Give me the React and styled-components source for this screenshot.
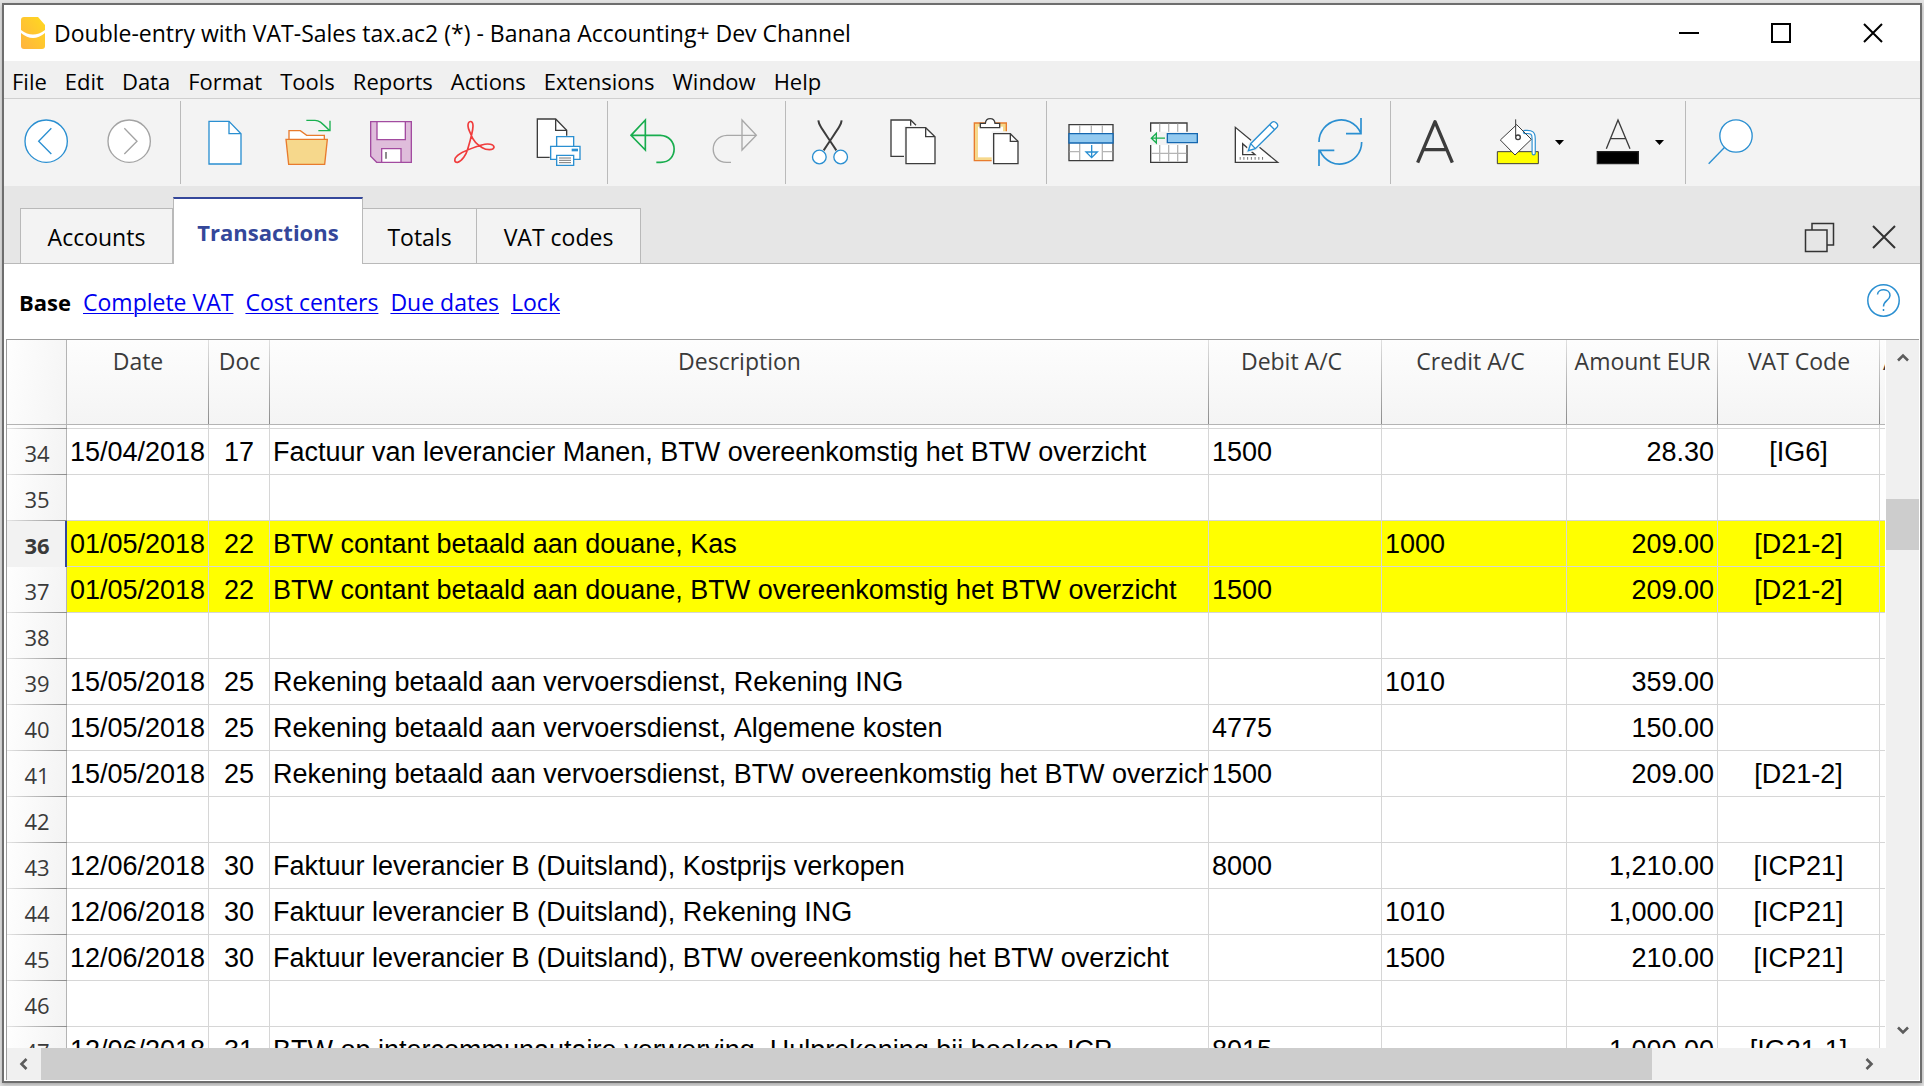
import React from "react";
import styled, { createGlobalStyle, css } from "styled-components";

const GlobalStyle = createGlobalStyle`
  *, *::before, *::after { box-sizing: border-box; }
  body { margin: 0; background: #e2e2e2; }
  button { font: inherit; color: inherit; background: none; border: 0; padding: 0; margin: 0; }
`;

const uiFont = `"Open Sans", "Noto Sans", sans-serif`;
const blue = "#2a8fd1";
const ink = "#3c3c3c";
const line = "#d6d6d6";

const Window = styled.div`
  height: calc(100vh - 6px);
  margin: 3px 2px;
  border: 2px solid #6e6e6e;
  box-shadow: 0 2px 4px rgba(0, 0, 0, 0.25);
  background: #fff;
  display: flex;
  flex-direction: column;
  overflow: hidden;
  font-family: ${uiFont};
  font-size: 23px;
  line-height: 32px;
  color: #000;
`;

/* ---------- title bar ---------- */

const TitleBar = styled.header`
  display: flex;
  align-items: center;
  height: 56px;
  flex: none;
  padding: 0 1px 0 17px;
`;

const Title = styled.h1`
  flex: 1;
  margin: 0 0 0 8px;
  font-size: inherit;
  font-weight: 400;
  white-space: nowrap;
`;

const CaptionButton = styled.button`
  width: 92px;
  height: 56px;
  display: flex;
  align-items: center;
  justify-content: center;
`;

const MenuBar = styled.nav`
  display: flex;
  align-items: center;
  gap: 18px;
  height: 38px;
  flex: none;
  padding: 2px 8px 0;
  background: #f0f0f0;
  border-bottom: 1px solid #cfcfcf;
  font-size: 22px;
`;

const MenuItem = styled.button`
  white-space: nowrap;
`;

/* ---------- toolbar ---------- */

const Toolbar = styled.div`
  display: flex;
  align-items: center;
  height: 87px;
  flex: none;
  padding-left: 2px;
  background: #f3f3f3;
`;

const Separator = styled.span`
  width: 1px;
  height: 83px;
  margin: 0 3px 0 8px;
  background: #bababa;
`;

const ToolButton = styled.button`
  width: ${(p) => (p.$split ? "74px" : "83px")};
  height: 87px;
  padding-left: 16px;
  display: flex;
  align-items: center;
`;

const DropButton = styled.button`
  width: 17px;
  height: 87px;
  margin-right: 9px;
  display: flex;
  align-items: center;
  justify-content: center;
`;

const Glyph = styled.svg`
  width: 51px;
  height: 51px;
  display: block;
  fill: none;
  stroke: ${(p) => p.$color || blue};
  stroke-width: 4;
`;

/* ---------- tabs ---------- */

const TabStrip = styled.div`
  display: flex;
  align-items: flex-end;
  height: 78px;
  flex: none;
  padding-left: 16px;
  background: linear-gradient(#b9b9b9, #b9b9b9) bottom / 100% 1px no-repeat, #e6e6e6;
`;

const Tab = styled.button`
  width: ${(p) => p.$width}px;
  height: 56px;
  padding-top: 2px;
  border: 1px solid #b9b9b9;
  border-left-width: ${(p) => (p.$joined ? 0 : 1)}px;
  background: #f3f3f3;
  white-space: nowrap;
  ${(p) =>
    p.$active &&
    css`
      height: 67px;
      padding-bottom: 2px;
      border-top: 2px solid #34479a;
      border-bottom: 0;
      background: #fff;
      color: #34479a;
      font-size: 22px;
      font-weight: 700;
    `}
`;

const TabActions = styled.div`
  display: flex;
  align-items: center;
  gap: 37px;
  margin-left: auto;
  height: 56px;
  padding: 2px 24px 0 0;
`;

const IconButton = styled.button`
  display: flex;
`;

/* ---------- view links ---------- */

const ViewBar = styled.div`
  display: flex;
  align-items: center;
  gap: 12px;
  height: 75px;
  flex: none;
  padding: 0 20px 0 15px;
  white-space: nowrap;
  & > button { margin-left: auto; }
`;

const CurrentView = styled.strong`
  font-size: 22px;
`;

const ViewLink = styled.a`
  color: #0000f0;
  text-decoration: underline;
  text-decoration-thickness: 1px;
  text-underline-offset: 2px;
`;

/* ---------- table ---------- */

const Frame = styled.main`
  flex: 1;
  min-height: 0;
  display: flex;
  flex-direction: column;
  margin: 0 1px 1px 2px;
  border: 1px solid #9d9d9d;
  border-right: 0;
  border-bottom: 0;
`;

const Upper = styled.div`
  flex: 1;
  min-height: 0;
  display: flex;
`;

const TableArea = styled.div`
  flex: 1;
  min-width: 0;
  overflow: hidden;
  margin-right: 1px;
`;

const Ledger = styled.table`
  width: 100%;
  table-layout: fixed;
  border-collapse: separate;
  border-spacing: 0;
`;

const HeadCell = styled.th`
  height: 85px;
  padding: 5px ${(p) => (p.$account ? 8 : 0)}px 0 ${(p) => (p.$clipped ? 3 : 0)}px;
  vertical-align: top;
  text-align: ${(p) => (p.$clipped ? "left" : "center")};
  font-weight: 400;
  color: #3a3a3a;
  white-space: nowrap;
  overflow: hidden;
  border-bottom: 1px solid #b4b4b4;
  background:
    linear-gradient(#e0e0e0, ${(p) => (p.$clipped ? "#f4f4f4" : "#8c8c8c")}) right / ${(p) => (p.$clipped ? 0 : 1)}px 100% no-repeat,
    linear-gradient(#fdfdfd, #f4f4f4);
`;

const Corner = styled.td`
  border-bottom: 1px solid #b4b4b4;
  background:
    linear-gradient(#b4b4b4, #b4b4b4) right / 1px 100% no-repeat,
    linear-gradient(100deg, #fefefe, #f4f4f4);
`;

const RowNumber = styled.th`
  padding: 1px 0 0;
  text-align: center;
  font-weight: ${(p) => (p.$current ? 700 : 400)};
  font-size: 22px;
  line-height: 32px;
  color: #3a3a3a;
  background:
    linear-gradient(90deg, #e4e4e4, #8c8c8c) bottom / 100% 1px no-repeat,
    linear-gradient(#b4b4b4, #b4b4b4) right / 1px 100% no-repeat,
    linear-gradient(100deg, #fefefe, #f3f3f3);
  ${(p) =>
    p.$current &&
    css`
      background:
        linear-gradient(#34479a, #34479a) right / 2px 100% no-repeat,
        #f2f2f2;
    `}
`;

const Cell = styled.td`
  height: ${(p) => (p.$stub ? 4 : 46)}px;
  padding: 0 ${(p) => (p.$align === "left" ? 0 : 3)}px 0 3px;
  font-family: "Liberation Sans", Arial, sans-serif;
  font-size: 27px;
  font-kerning: none;
  line-height: 32px;
  text-align: ${(p) => p.$align || "left"};
  white-space: nowrap;
  border-right: 1px solid ${line};
  border-bottom: 1px solid ${line};
  background: ${(p) => (p.$marked ? "#ffff00" : "#fff")};
  background-clip: padding-box;
  &:last-child { padding: 0; border-right: 0; }
`;

const CellText = styled.div`
  overflow: hidden;
`;

/* ---------- scroll bars ---------- */

const Bar = styled.div`
  display: flex;
  flex: none;
  flex-direction: ${(p) => (p.$vertical ? "column" : "row")};
  width: ${(p) => (p.$vertical ? "33px" : "auto")};
  height: ${(p) => (p.$vertical ? "auto" : "32px")};
  padding-right: ${(p) => (p.$vertical ? 0 : 33)}px;
  background: #f0f0f0;
`;

const Stepper = styled.button`
  flex: none;
  width: ${(p) => (p.$vertical ? 33 : 34)}px;
  height: ${(p) => (p.$vertical ? 36 : 32)}px;
  display: flex;
  align-items: center;
  justify-content: center;
`;

const Track = styled.span`
  flex: ${(p) => p.$share} 1 0;
  background: ${(p) => (p.$thumb ? "#cdcdcd" : "transparent")};
`;

/* ---------- drawings ---------- */

const Tool = ({ label, x, color, split, children }) => (
  <ToolButton type="button" aria-label={label} $split={split}>
    <Glyph viewBox={`${x} 63 153 153`} $color={color} aria-hidden="true">
      {children}
    </Glyph>
  </ToolButton>
);

const Drop = ({ label }) => (
  <DropButton type="button" aria-label={label}>
    <svg width="9" height="5" viewBox="0 0 9 5" aria-hidden="true">
      <path d="M0 0h9L4.500 5z" />
    </svg>
  </DropButton>
);

const Chevron = ({ turn }) => (
  <svg width="12" height="12" viewBox="0 0 12 12" aria-hidden="true">
    <path
      d="M1 8.500L6 3.500L11 8.500"
      fill="none"
      stroke="#5c5c5c"
      strokeWidth="2.600"
      transform={`rotate(${turn} 6 6)`}
    />
  </svg>
);

const columns = [
  { label: "Date", width: 142, align: "left" },
  { label: "Doc", width: 61, align: "center" },
  { label: "Description", align: "left" },
  { label: "Debit A/C", width: 173, align: "left", account: true },
  { label: "Credit A/C", width: 185, align: "left", account: true },
  { label: "Amount EUR", width: 151, align: "right" },
  { label: "VAT Code", width: 162, align: "center" },
];

const rows = [
  [34, "15/04/2018", "17", "Factuur van leverancier Manen, BTW overeenkomstig het BTW overzicht", "1500", "", "28.30", "[IG6]"],
  [35],
  [36, "01/05/2018", "22", "BTW contant betaald aan douane, Kas", "", "1000", "209.00", "[D21-2]"],
  [37, "01/05/2018", "22", "BTW contant betaald aan douane, BTW overeenkomstig het BTW overzicht", "1500", "", "209.00", "[D21-2]"],
  [38],
  [39, "15/05/2018", "25", "Rekening betaald aan vervoersdienst, Rekening ING", "", "1010", "359.00", ""],
  [40, "15/05/2018", "25", "Rekening betaald aan vervoersdienst, Algemene kosten", "4775", "", "150.00", ""],
  [41, "15/05/2018", "25", "Rekening betaald aan vervoersdienst, BTW overeenkomstig het BTW overzicht", "1500", "", "209.00", "[D21-2]"],
  [42],
  [43, "12/06/2018", "30", "Faktuur leverancier B (Duitsland), Kostprijs verkopen", "8000", "", "1,210.00", "[ICP21]"],
  [44, "12/06/2018", "30", "Faktuur leverancier B (Duitsland), Rekening ING", "", "1010", "1,000.00", "[ICP21]"],
  [45, "12/06/2018", "30", "Faktuur leverancier B (Duitsland), BTW overeenkomstig het BTW overzicht", "", "1500", "210.00", "[ICP21]"],
  [46],
  [47, "12/06/2018", "31", "BTW op intercommunautaire verwerving, Hulprekening bij boeken ICP", "8015", "", "1,000.00", "[IG21-1]"],
];

const marked = new Set([36, 37]);
const currentRow = 36;

const LedgerTable = () => (
  <Ledger>
    <colgroup>
      <col style={{ width: 60 }} />
      {columns.map((c) => (
        <col key={c.label} style={{ width: c.width }} />
      ))}
      <col style={{ width: 5 }} />
    </colgroup>
    <thead>
      <tr>
        <Corner />
        {columns.map((c) => (
          <HeadCell key={c.label} scope="col" $account={c.account}>{c.label}</HeadCell>
        ))}
        <HeadCell scope="col" $clipped>Amount</HeadCell>
      </tr>
    </thead>
    <tbody>
      <tr>
        <RowNumber as="td" />
        {columns.map((c) => (
          <Cell key={c.label} $stub />
        ))}
        <Cell $stub />
      </tr>
      {rows.map(([number, ...values]) => (
        <tr key={number}>
          <RowNumber scope="row" $current={number === currentRow}>{number}</RowNumber>
          {columns.map((c, i) => (
            <Cell key={c.label} $align={c.align} $marked={marked.has(number)}>
              {values[i] && <CellText>{values[i]}</CellText>}
            </Cell>
          ))}
          <Cell $marked={marked.has(number)} />
        </tr>
      ))}
    </tbody>
  </Ledger>
);

const MainToolbar = () => (
  <Toolbar role="toolbar" aria-label="Main">
    <Tool label="Back" x={66}>
      <circle cx="138.500" cy="135.500" r="63.500" fill="#fff" />
      <path d="M154 97L116 135.500L154 174" />
    </Tool>
    <Tool label="Forward" x={315} color="#a3a3a3">
      <circle cx="387.500" cy="135.500" r="63.500" fill="#fff" />
      <path d="M373 97L411 135.500L373 174" />
    </Tool>
    <Separator />
    <Tool label="New" x={600}>
      <path d="M627 76H687L723 113V204H627Z" fill="#fff" />
      <path d="M687 76V113H723" />
    </Tool>
    <Tool label="Open" x={849} color="#e87b2d">
      <path d="M867 130V104H901L920 118H973V130" fill="#fff" />
      <path d="M858 130H982L974 205H866Z" fill="#f6d88c" />
      <path d="M919 73H945C957 73 962 77 989 104M955 104H990V74" stroke="#18b04f" />
    </Tool>
    <Tool label="Save" x={1098} color="#a24ba0">
      <path d="M1112 77H1234V199H1130L1112 181Z" fill="#dfbddb" />
      <path d="M1131 77H1216V131H1131ZM1145 158H1203V199H1145Z" fill="#fff" />
      <path d="M1158 168V188" stroke="#555" />
    </Tool>
    <Tool label="Export to PDF" x={87} color="#f03c3c">
      <path strokeWidth="5" d="M144 90C143 72 159 72 159 90C159 105 155 120 143 160C139 175 126 196 113 199C102 200 102 188 110 181C120 170 150 158 185 147C205 141 222 145 222 154C220 163 200 163 187 155C170 145 158 130 153 116C148 104 144 98 144 90Z" />
    </Tool>
    <Tool label="Print" x={336} color={ink}>
      <path d="M352 69H407L440 103V184H352Z" fill="#fff" />
      <path d="M407 69V103H440" />
      <path d="M389 149H407V119H464V149H483V193H464V211H407V193H389Z" fill="#f3f3f3" stroke="none" />
      <g stroke={blue} fill="#fff">
        <path d="M410 122H461V151H410ZM392 151H480V190H392Z" />
        <path d="M455 158H474V166H455Z" fill={blue} stroke="none" />
        <path d="M410 178H461V208H410Z" />
      </g>
      <path d="M417 186H453M417 193H453M417 200H453" stroke="#777" strokeWidth="3" />
    </Tool>
    <Separator />
    <Tool label="Undo" x={621} color="#18ad4e">
      <path strokeWidth="5" d="M676 72V162L633 118ZM633 118H721C776 120 776 199 722 199H709" />
    </Tool>
    <Tool label="Redo" x={870} color="#a8a8a8">
      <path d="M966 72V162L1009 118ZM1009 118H921C866 120 866 199 920 199H933" />
    </Tool>
    <Separator />
    <Tool label="Cut" x={75} color={ink}>
      <path strokeWidth="6" d="M115 73C117 88 124 95 169 163M185 73C183 88 176 95 131 163" />
      <g stroke={blue}>
        <circle cx="118" cy="183" r="20.500" fill="#fff" />
        <circle cx="182" cy="183" r="20.500" fill="#fff" />
      </g>
    </Tool>
    <Tool label="Copy" x={324} color={ink}>
      <path d="M372 181H333V72H392L408 88" fill="#fff" />
      <path d="M392 72V88H372V181" stroke="none" fill="#fff" />
      <path d="M392 72V89" />
      <path d="M373 90H440L470 122V207H373Z" fill="#f3f3f3" stroke="none" />
      <path d="M378 95H437L465 122V203H378Z" fill="#fff" />
      <path d="M437 95V122H465" />
    </Tool>
    <Tool label="Paste" x={573} color={ink}>
      <path d="M583 81H679V194H583Z" fill="#f6d88c" stroke="#e87b2d" />
      <path d="M594 92H669V184H594Z" fill="#fff" stroke="none" />
      <path d="M601 95V82H616C618 63 643 63 645 82H659V95Z" fill="#fff" />
      <path d="M635 106H694L719 130V212H635Z" fill="#f3f3f3" stroke="none" />
      <path d="M641 113H691L714 136V203H641Z" fill="#fff" />
      <path d="M691 113V136H714" />
    </Tool>
    <Separator />
    <Tool label="Insert rows" x={78} color={ink}>
      <path d="M87 86H219V194H87Z" fill="#fff" />
      <path d="M119 88V110M154 88V110M187 88V110M119 142V192M187 142V192M89 167H119M187 167H217" stroke="#b5b5b5" />
      <path d="M87 113H219V141H87Z" fill="#93caf0" stroke="#1467b0" />
      <path d="M155 147V185M138 168H172L155 185Z" stroke={blue} />
    </Tool>
    <Tool label="Delete rows" x={327} color={ink}>
      <path d="M332 81H441V199H332Z" fill="#fff" />
      <path d="M359 83V197M386 83V197M413 83V197M334 172H439" stroke="#b5b5b5" />
      <path d="M328 107H478V147H328Z" fill="#f3f3f3" stroke="none" />
      <path d="M382 113H472V140H382Z" fill="#93caf0" stroke="#1467b0" />
      <path d="M375 126.500H334M349 112V141L334 126.500Z" stroke="#18ad4e" />
    </Tool>
    <Tool label="Design" x={576} color={ink}>
      <path d="M586 94V199H713Z" fill="#fff" />
      <path d="M608 143V176H645Z" />
      <path d="M599 187H672" stroke="#777" strokeWidth="8" strokeDasharray="3 8.200" />
      <path d="M625 164L632 143L696 79C704 72 718 86 711 94L646 158Z" fill="#fff" stroke="#f3f3f3" strokeWidth="12" />
      <path d="M625 164L632 143L696 79C704 72 718 86 711 94L646 158ZM632 143L646 158M689 86L704 101" fill="#fff" stroke={blue} />
    </Tool>
    <Tool label="Recalculate" x={825}>
      <path d="M837 138C837 72 930 42 963 112M963 66V113H918M965 138C965 205 872 234 839 163M837 210V163H883" strokeWidth="5" />
    </Tool>
    <Separator />
    <Tool label="Bold" x={60} color={ink}>
      <path strokeWidth="10" strokeLinejoin="round" d="M83 200L135 77L187 200M98 161H172" />
    </Tool>
    <Tool label="Fill colour" x={309} color={ink} split>
      <path d="M322 167H445V203H322Z" fill="#ffff00" strokeWidth="3" />
      <path d="M380 86L424 130L375 177L331 132Z" fill="#fff" strokeWidth="3" />
      <path d="M405 108C426 106 431 112 431 128V172" stroke={blue} strokeWidth="13" strokeLinecap="round" />
      <path d="M405 108C426 106 431 112 431 128V172" stroke="#fff" strokeWidth="6" strokeLinecap="round" />
      <path d="M380 86L424 130" strokeWidth="3" />
      <path d="M377 70V120" strokeWidth="3" />
      <circle cx="384" cy="124" r="7" />
    </Tool>
    <Drop label="Fill colour options" />
    <Tool label="Text colour" x={609} color={ink} split>
      <path d="M649 158L684 72L720 158M661 128H707" />
      <path d="M622 167H745V203H622Z" fill="#000" stroke="#222" />
    </Tool>
    <Drop label="Text colour options" />
    <Separator />
    <Tool label="Find" x={945}>
      <circle cx="1038" cy="120" r="48.500" fill="#fff" />
      <path d="M1004 154L956 203" />
    </Tool>
  </Toolbar>
);

export default function App() {
  return (
    <>
      <GlobalStyle />
      <Window>
        <TitleBar>
          <svg width="25" height="33" viewBox="0 0 25 33" aria-hidden="true">
            <defs>
              <linearGradient id="peel" x1="1" y1="0" x2="0" y2="1">
                <stop offset="0" stopColor="#ffd91f" />
                <stop offset="1" stopColor="#ffb340" />
              </linearGradient>
            </defs>
            <path d="M3 0H17L24 8V29Q24 32 21 32H3Q0 32 0 29V3Q0 0 3 0Z" fill="url(#peel)" />
            <path d="M0 13Q12 22 24 13V16Q12 26 0 16Z" fill="#fff" />
          </svg>
          <Title>Double-entry with VAT-Sales tax.ac2 (*) - Banana Accounting+ Dev Channel</Title>
          <CaptionButton type="button" aria-label="Minimize">
            <svg width="20" height="20" aria-hidden="true"><path d="M0 10H20" stroke="#000" strokeWidth="2" /></svg>
          </CaptionButton>
          <CaptionButton type="button" aria-label="Maximize">
            <svg width="20" height="20" aria-hidden="true"><path d="M1 1H19V19H1Z" fill="none" stroke="#000" strokeWidth="2" /></svg>
          </CaptionButton>
          <CaptionButton type="button" aria-label="Close">
            <svg width="20" height="20" aria-hidden="true"><path d="M1 1L19 19M19 1L1 19" stroke="#000" strokeWidth="2" /></svg>
          </CaptionButton>
        </TitleBar>
        <MenuBar>
          {["File", "Edit", "Data", "Format", "Tools", "Reports", "Actions", "Extensions", "Window", "Help"].map((m) => (
            <MenuItem key={m} type="button">{m}</MenuItem>
          ))}
        </MenuBar>
        <MainToolbar />
        <TabStrip>
          <Tab type="button" $width={153}>Accounts</Tab>
          <Tab type="button" $width={190} $active>Transactions</Tab>
          <Tab type="button" $width={114} $joined>Totals</Tab>
          <Tab type="button" $width={164} $joined>VAT codes</Tab>
          <TabActions>
            <IconButton type="button" aria-label="Restore pane">
              <svg width="31" height="31" viewBox="0 0 31 31" fill="none" stroke="#333" aria-hidden="true">
                <path d="M8 8V1.500H29.500V23H23M1.500 8H23V29.500H1.500Z" strokeWidth="1.500" />
              </svg>
            </IconButton>
            <IconButton type="button" aria-label="Close pane">
              <svg width="24" height="24" aria-hidden="true"><path d="M1 1L23 23M23 1L1 23" stroke="#333" strokeWidth="2" /></svg>
            </IconButton>
          </TabActions>
        </TabStrip>
        <ViewBar>
          <CurrentView>Base</CurrentView>
          <ViewLink href="#complete-vat">Complete VAT</ViewLink>
          <ViewLink href="#cost-centers">Cost centers</ViewLink>
          <ViewLink href="#due-dates">Due dates</ViewLink>
          <ViewLink href="#lock">Lock</ViewLink>
          <IconButton type="button" aria-label="Help">
            <svg width="33" height="35" viewBox="0 0 33 35" fill="none" stroke={blue} strokeWidth="1.500" aria-hidden="true">
              <circle cx="16.500" cy="16.500" r="15.700" />
              <path d="M10.500 10.500C11 4 23 4 23 11.500C23 16.500 16.500 16.500 16.500 22.500M16.500 25V27" />
            </svg>
          </IconButton>
        </ViewBar>
        <Frame>
          <Upper>
            <TableArea>
              <LedgerTable />
            </TableArea>
            <Bar $vertical>
              <Stepper type="button" aria-label="Scroll up" $vertical><Chevron turn={0} /></Stepper>
              <Track $share={123} />
              <Track $share={51} $thumb />
              <Track $share={462} />
              <Stepper type="button" aria-label="Scroll down" $vertical><Chevron turn={180} /></Stepper>
            </Bar>
          </Upper>
          <Bar>
            <Stepper type="button" aria-label="Scroll left"><Chevron turn={-90} /></Stepper>
            <Track $share={1610} $thumb />
            <Track $share={200} />
            <Stepper type="button" aria-label="Scroll right"><Chevron turn={90} /></Stepper>
          </Bar>
        </Frame>
      </Window>
    </>
  );
}
